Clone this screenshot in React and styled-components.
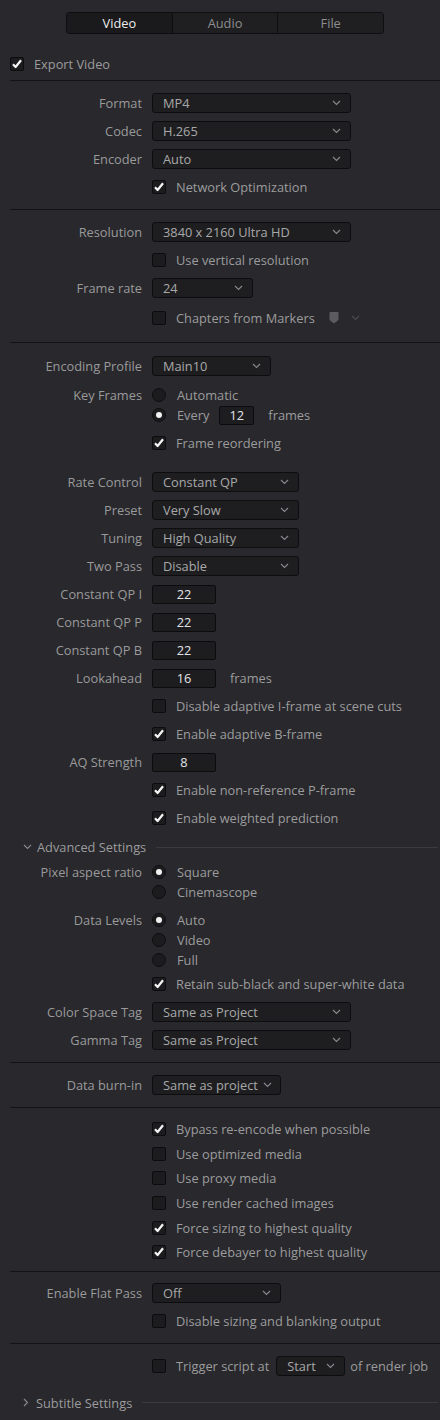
import styled, { createGlobalStyle } from "styled-components";

const Global = createGlobalStyle`
  html, body {
    margin: 0;
    padding: 0;
    background: #28282d;
  }
  body {
    font-family: "Open Sans", "Noto Sans", sans-serif;
    font-size: 12.8px;
    color: #9c9c9c;
  }
`

const Panel = styled.div`
  width: 440px;
  height: 1420px;
  padding-top: 12px;
  box-sizing: border-box;
  overflow: hidden;
`

const Tabs = styled.div`
  display: flex;
  margin-left: 66px;
  width: 318px;
  height: 22px;
  box-sizing: border-box;
  border: 1px solid #0e0e10;
  border-radius: 3px;
  overflow: hidden;
`

const Tab = styled.div`
  flex: 1;
  display: flex;
  align-items: center;
  justify-content: center;
  background: ${p => (p.$active ? "#1a1a1c" : "#1f1f22")};
  color: ${p => (p.$active ? "#ececec" : "#8e8e8e")};
  & + & {
    border-left: 1px solid #0e0e10;
  }
`

const ExportRow = styled.div`
  display: flex;
  align-items: center;
  gap: 10px;
  height: 28px;
  margin-top: 16px;
  margin-bottom: 2px;
  padding-left: 10px;
`

const Divider = styled.div`
  height: 1px;
  margin-left: 10px;
  background: #131315;
`

const Section = styled.div`
  padding: ${p => p.$top ?? 8}px 0 ${p => p.$bottom ?? 8}px;
`

const Row = styled.div`
  display: flex;
  align-items: center;
  height: ${p => p.$h ?? 28}px;
  margin-top: ${p => p.$mt ?? 0}px;
`

const Label = styled.div`
  width: 152px;
  flex: none;
  padding-right: 10px;
  box-sizing: border-box;
  text-align: right;
  white-space: nowrap;
  color: #9a9a9a;
`

const Field = styled.div`
  display: flex;
  align-items: center;
  white-space: nowrap;
`

const SelectBox = styled.div`
  display: flex;
  align-items: center;
  justify-content: ${p => (p.$tight ? "flex-start" : "space-between")};
  width: ${p => p.$w}px;
  height: 20px;
  box-sizing: border-box;
  padding: 0 9px 0 10px;
  margin-left: ${p => p.$ml ?? 0}px;
  background: #1e1e21;
  border: 1px solid #0d0d0f;
  border-radius: 3px;
  color: #a8a8a8;
`

const Chevron = styled.svg`
  width: 9px;
  height: 6px;
  flex: none;
  margin-left: ${p => p.$ml ?? 0}px;
`

const Select = ({ w, value, tight, ml }) => (
  <SelectBox $w={w} $ml={ml} $tight={tight}>
    <span>{value}</span>
    <Chevron viewBox="0 0 9 6" $ml={tight ? 5 : 0}>
      <path d="M1 1 L4.5 4.5 L8 1" fill="none" stroke="#8a8a8e" strokeWidth="1.1" />
    </Chevron>
  </SelectBox>
)

const Box = styled.div`
  width: 14px;
  height: 14px;
  flex: none;
  box-sizing: border-box;
  background: #1c1c1e;
  border: 1px solid #0c0c0e;
  border-radius: 2px;
  display: flex;
  align-items: center;
  justify-content: center;
`

const BoxText = styled.span`
  margin-left: 10px;
  color: #9c9c9c;
`

const Check = ({ on, children }) => (
  <Field>
    <Box>
      {on && (
        <svg width="12" height="12" viewBox="0 0 12 12">
          <path d="M2 6.2 L4.6 9 L10 2.2" fill="none" stroke="#f4f4f4" strokeWidth="2.2" strokeLinejoin="round" />
        </svg>
      )}
    </Box>
    {children && <BoxText>{children}</BoxText>}
  </Field>
)

const Circle = styled.div`
  width: 14px;
  height: 14px;
  flex: none;
  box-sizing: border-box;
  border-radius: 50%;
  background: #1c1c1e;
  border: 1px solid #0f0f11;
  display: flex;
  align-items: center;
  justify-content: center;
  &::after {
    content: "";
    display: ${p => (p.$on ? "block" : "none")};
    width: 6px;
    height: 6px;
    border-radius: 50%;
    background: #f2f2f2;
  }
`

const RadioText = styled.span`
  margin-left: 11px;
  color: #9c9c9c;
`

const Radio = ({ on, children }) => (
  <Field>
    <Circle $on={on} />
    <RadioText>{children}</RadioText>
  </Field>
)

const NumBox = styled.div`
  width: ${p => p.$w}px;
  height: 19px;
  box-sizing: border-box;
  margin-left: ${p => p.$ml ?? 0}px;
  display: flex;
  align-items: center;
  justify-content: center;
  background: #1d1d20;
  border: 1px solid #0c0c0e;
  border-radius: 2px;
  color: #e2e2e6;
`

const Unit = styled.span`
  margin-left: ${p => p.$ml}px;
  color: #9c9c9c;
`

const Fold = styled.div`
  display: flex;
  align-items: center;
  height: 24px;
  padding-left: 23px;
  margin-top: ${p => p.$mt ?? 0}px;
  color: #9c9c9c;
`

const FoldTitle = styled.span`
  margin-left: ${p => p.$ml}px;
`

const FoldLine = styled.div`
  flex: 1;
  height: 1px;
  margin: 0 2px 0 ${p => p.$gap}px;
  background: #3a3a40;
`

const Marker = styled.svg`
  width: 10px;
  height: 12px;
  margin-left: 14px;
`

const Row2 = ({ label, children, h, mt }) => (
  <Row $h={h} $mt={mt}>
    <Label>{label}</Label>
    <Field>{children}</Field>
  </Row>
)

export default function App() {
  return (
    <Panel>
      <Global />
      <Tabs>
        <Tab $active>Video</Tab>
        <Tab>Audio</Tab>
        <Tab>File</Tab>
      </Tabs>

      <ExportRow>
        <Check on />
        <span>Export Video</span>
      </ExportRow>
      <Divider />

      <Section>
        <Row2 label="Format"><Select w={199} value="MP4" /></Row2>
        <Row2 label="Codec"><Select w={199} value="H.265" /></Row2>
        <Row2 label="Encoder"><Select w={199} value="Auto" /></Row2>
        <Row2><Check on>Network Optimization</Check></Row2>
      </Section>
      <Divider />

      <Section>
        <Row2 label="Resolution"><Select w={199} value="3840 x 2160 Ultra HD" /></Row2>
        <Row2><Check>Use vertical resolution</Check></Row2>
        <Row2 label="Frame rate"><Select w={101} value="24" /></Row2>
        <Row2 h={32}>
          <Check>Chapters from Markers</Check>
          <Marker viewBox="0 0 10 12">
            <path d="M0.5 1 Q0.5 0 1.5 0 H8.5 Q9.5 0 9.5 1 V8 L5 11.5 L0.5 8 Z" fill="#5b5b60" />
          </Marker>
          <Chevron viewBox="0 0 9 6" $ml={12}>
            <path d="M1 1 L4.5 4.5 L8 1" fill="none" stroke="#4c4c52" strokeWidth="1.1" />
          </Chevron>
        </Row2>
      </Section>
      <Divider />

      <Section $top={9}>
        <Row2 label="Encoding Profile"><Select w={119} value="Main10" /></Row2>
        <Row2 label="Key Frames" h={20} mt={5}><Radio>Automatic</Radio></Row2>
        <Row2 h={20}>
          <Radio on>Every</Radio>
          <NumBox $w={35} $ml={10}>12</NumBox>
          <Unit $ml={14}>frames</Unit>
        </Row2>
        <Row2 mt={4}><Check on>Frame reordering</Check></Row2>

        <Row2 label="Rate Control" mt={11}><Select w={147} value="Constant QP" /></Row2>
        <Row2 label="Preset"><Select w={147} value="Very Slow" /></Row2>
        <Row2 label="Tuning"><Select w={147} value="High Quality" /></Row2>
        <Row2 label="Two Pass"><Select w={147} value="Disable" /></Row2>
        <Row2 label="Constant QP I"><NumBox $w={64}>22</NumBox></Row2>
        <Row2 label="Constant QP P"><NumBox $w={64}>22</NumBox></Row2>
        <Row2 label="Constant QP B"><NumBox $w={64}>22</NumBox></Row2>
        <Row2 label="Lookahead">
          <NumBox $w={64}>16</NumBox>
          <Unit $ml={14}>frames</Unit>
        </Row2>
        <Row2><Check>Disable adaptive I-frame at scene cuts</Check></Row2>
        <Row2><Check on>Enable adaptive B-frame</Check></Row2>
        <Row2 label="AQ Strength"><NumBox $w={64}>8</NumBox></Row2>
        <Row2><Check on>Enable non-reference P-frame</Check></Row2>
        <Row2><Check on>Enable weighted prediction</Check></Row2>

        <Fold $mt={3}>
          <Chevron viewBox="0 0 9 6">
            <path d="M1 1 L4.5 4.5 L8 1" fill="none" stroke="#8a8a8e" strokeWidth="1.1" />
          </Chevron>
          <FoldTitle $ml={5}>Advanced Settings</FoldTitle>
          <FoldLine $gap={10} />
        </Fold>
        <Row2 label="Pixel aspect ratio" h={20} mt={3}><Radio on>Square</Radio></Row2>
        <Row2 h={20}><Radio>Cinemascope</Radio></Row2>
        <Row2 label="Data Levels" h={20} mt={8}><Radio on>Auto</Radio></Row2>
        <Row2 h={20}><Radio>Video</Radio></Row2>
        <Row2 h={20}><Radio>Full</Radio></Row2>
        <Row2><Check on>Retain sub-black and super-white data</Check></Row2>
        <Row2 label="Color Space Tag"><Select w={199} value="Same as Project" /></Row2>
        <Row2 label="Gamma Tag"><Select w={199} value="Same as Project" /></Row2>
      </Section>
      <Divider />

      <Section>
        <Row2 label="Data burn-in"><Select w={129} value="Same as project" tight /></Row2>
      </Section>
      <Divider />

      <Section $top={9} $bottom={6}>
        <Row2 h={24.6}><Check on>Bypass re-encode when possible</Check></Row2>
        <Row2 h={24.6}><Check>Use optimized media</Check></Row2>
        <Row2 h={24.6}><Check>Use proxy media</Check></Row2>
        <Row2 h={24.6}><Check>Use render cached images</Check></Row2>
        <Row2 h={24.6}><Check on>Force sizing to highest quality</Check></Row2>
        <Row2 h={24.6}><Check on>Force debayer to highest quality</Check></Row2>
      </Section>
      <Divider />

      <Section $top={7}>
        <Row2 label="Enable Flat Pass"><Select w={129} value="Off" /></Row2>
        <Row2><Check>Disable sizing and blanking output</Check></Row2>
      </Section>
      <Divider />

      <Section>
        <Row2>
          <Check>Trigger script at</Check>
          <Select w={69} value="Start" ml={7} />
          <Unit $ml={5}>of render job</Unit>
        </Row2>
        <Fold $mt={11}>
          <svg width="6" height="9" viewBox="0 0 6 9">
            <path d="M1 1 L4.5 4.5 L1 8" fill="none" stroke="#8a8a8e" strokeWidth="1.1" />
          </svg>
          <FoldTitle $ml={7}>Subtitle Settings</FoldTitle>
          <FoldLine $gap={10} />
        </Fold>
      </Section>
    </Panel>
  );
}
